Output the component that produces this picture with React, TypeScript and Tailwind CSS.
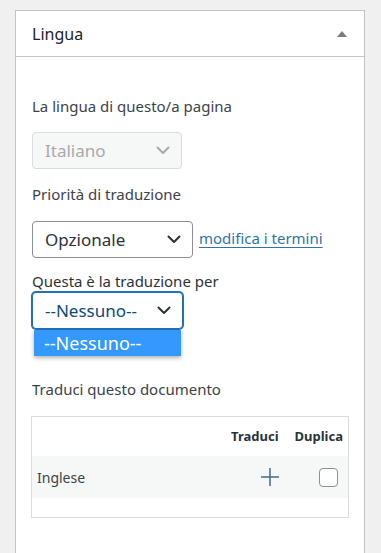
import React from "react";

const Chevron = ({ color = "#2c3338" }: { color?: string }) => (
  <svg width="14" height="9" viewBox="0 0 14 9" fill="none">
    <path d="M1.5 1.5 L7 7 L12.5 1.5" stroke={color} strokeWidth="2" strokeLinecap="round" strokeLinejoin="round" />
  </svg>
);

export default function App() {
  return (
    <div
      className="h-[553px] bg-[#f0f0f1] pt-[10px] pl-[15px] overflow-hidden"
      style={{ fontFamily: '"Noto Sans", "Open Sans", Arial, sans-serif' }}
    >
      <div className="w-[350px] h-[560px] border border-[#c3c4c7] bg-white">
        {/* header */}
        <div className="h-[46px] border-b border-[#c3c4c7] flex items-center justify-between pl-[16px] pr-[17px]">
          <span className="text-[16px] text-[#1d2327]">Lingua</span>
          <svg width="10" height="6" viewBox="0 0 10 6">
            <path d="M0 6 L5 0 L10 6 Z" fill="#787c82" />
          </svg>
        </div>

        <div className="pl-[16px] pr-[15px] flex flex-col">
          <div className="mt-[39px] h-[20px] leading-[20px] text-[15px] text-[#3c434a]">
            La lingua di questo/a pagina
          </div>
          <div className="mt-[16px] w-[150px] h-[37px] rounded-[4px] border border-[#dcdcde] bg-[#f6f7f7] flex items-center justify-between pl-[12px] pr-[11px]">
            <span className="text-[17px] text-[#a7aaad]">Italiano</span>
            <Chevron color="#a7aaad" />
          </div>

          <div className="mt-[15px] h-[20px] leading-[20px] text-[15px] text-[#3c434a]">
            Priorità di traduzione
          </div>
          <div className="mt-[17px] flex items-center gap-[6px]">
            <div className="w-[161px] h-[37px] rounded-[4px] border border-[#8c8f94] bg-white flex items-center justify-between pl-[12px] pr-[11px]">
              <span className="text-[17px] text-[#2c3338]">Opzionale</span>
              <Chevron />
            </div>
            <a className="text-[15px] text-[#2e75a6] underline underline-offset-[3px] -mt-[2px]">modifica i termini</a>
          </div>

          <div className="mt-[14px] h-[18px] leading-[18px] text-[15px] text-[#2c3338]">
            Questa è la traduzione per
          </div>
          <div className="relative mt-[2px] w-[151px]">
            <div className="h-[37px] rounded-[4px] border border-[#2271b1] shadow-[0_0_0_1px_#2271b1] bg-white flex items-center justify-between pl-[12px] pr-[11px]">
              <span className="text-[17px] text-[#0a4b78]">--Nessuno--</span>
              <Chevron />
            </div>
            <div className="absolute left-[2px] top-[38px] w-[147px] h-[26px] bg-[#3399ff] shadow-[0_2px_4px_rgba(0,0,0,0.3)] flex items-center pl-[10px]">
              <span className="text-[18px] text-white leading-none">--Nessuno--</span>
            </div>
          </div>

          <div className="mt-[50px] h-[20px] leading-[20px] text-[15px] text-[#3c434a]">
            Traduci questo documento
          </div>

          <div className="mt-[17px] -ml-px w-[318px] h-[102px] border border-[#dcdcde] flex flex-col">
            <div className="h-[39px] flex items-center justify-end pr-[5px] gap-[16px] text-[13px] font-bold text-[#2c3338]">
              <span>Traduci</span>
              <span>Duplica</span>
            </div>
            <div className="h-[42px] bg-[#f6f7f7] flex items-center pl-[5px]">
              <span className="flex-1 text-[14px] text-[#3c434a]">Inglese</span>
              <div className="w-[20px] h-[20px] mr-[39px]">
                <svg width="20" height="20" viewBox="0 0 20 20">
                  <path d="M10 1 V19 M1 10 H19" stroke="#3f6e93" strokeWidth="1.5" />
                </svg>
              </div>
              <div className="w-[19px] h-[19px] mr-[10px] rounded-[4px] border border-[#8c8f94] bg-white" />
            </div>
          </div>
        </div>
      </div>
    </div>
  );
}
